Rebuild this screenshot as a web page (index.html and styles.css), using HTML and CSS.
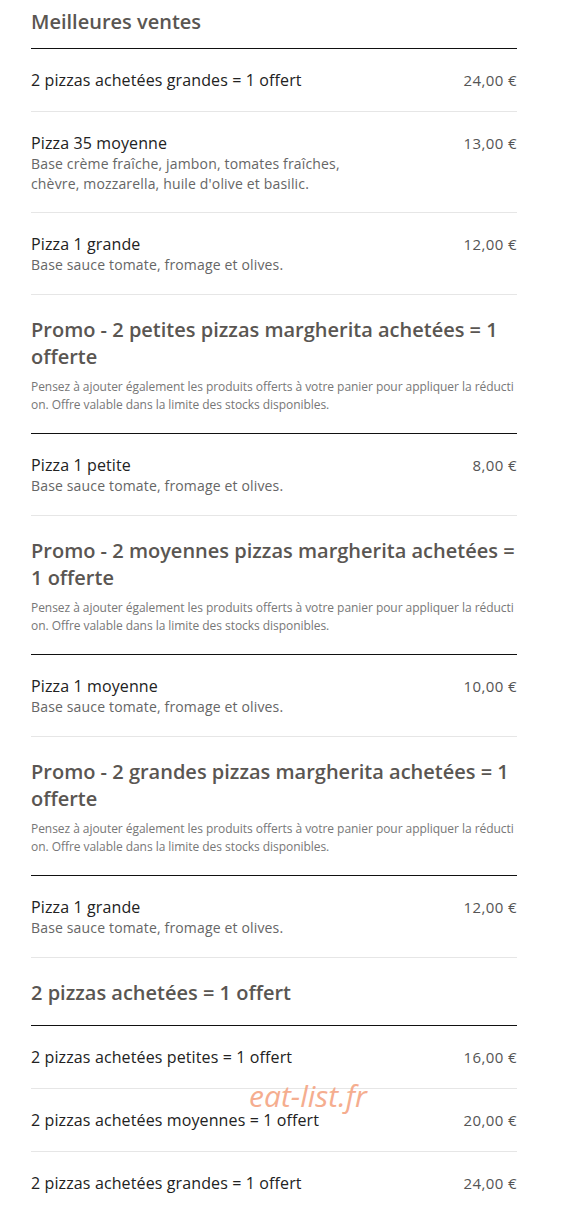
FILE: index.html
```html
<!DOCTYPE html>
<html lang="fr">
<head>
<meta charset="utf-8">
<title>Menu</title>
<link rel="stylesheet" href="styles.css">
</head>
<body>
<main class="menu">
  <section class="category">
    <h2 class="cat-title cat-title--first">Meilleures ventes</h2>
    <div class="items">
      <div class="item"><div class="item-main"><div class="item-name">2 pizzas achetées grandes = 1 offert</div></div><div class="item-price">24,00 €</div></div>
      <div class="item"><div class="item-main"><div class="item-name">Pizza 35 moyenne</div><div class="item-desc item-desc--multi">Base crème fraîche, jambon, tomates fraîches,<br>chèvre, mozzarella, huile d'olive et basilic.</div></div><div class="item-price">13,00 €</div></div>
      <div class="item"><div class="item-main"><div class="item-name">Pizza 1 grande</div><div class="item-desc">Base sauce tomate, fromage et olives.</div></div><div class="item-price">12,00 €</div></div>
    </div>
  </section>

  <section class="category">
    <h2 class="cat-title">Promo - 2 petites pizzas margherita achetées = 1 offerte</h2>
    <p class="cat-desc">Pensez à ajouter également les produits offerts à votre panier pour appliquer la réduction. Offre valable dans la limite des stocks disponibles.</p>
    <div class="items">
      <div class="item"><div class="item-main"><div class="item-name">Pizza 1 petite</div><div class="item-desc">Base sauce tomate, fromage et olives.</div></div><div class="item-price">8,00 €</div></div>
    </div>
  </section>

  <section class="category">
    <h2 class="cat-title">Promo - 2 moyennes pizzas margherita achetées = 1 offerte</h2>
    <p class="cat-desc">Pensez à ajouter également les produits offerts à votre panier pour appliquer la réduction. Offre valable dans la limite des stocks disponibles.</p>
    <div class="items">
      <div class="item"><div class="item-main"><div class="item-name">Pizza 1 moyenne</div><div class="item-desc">Base sauce tomate, fromage et olives.</div></div><div class="item-price">10,00 €</div></div>
    </div>
  </section>

  <section class="category">
    <h2 class="cat-title">Promo - 2 grandes pizzas margherita achetées = 1 offerte</h2>
    <p class="cat-desc">Pensez à ajouter également les produits offerts à votre panier pour appliquer la réduction. Offre valable dans la limite des stocks disponibles.</p>
    <div class="items">
      <div class="item"><div class="item-main"><div class="item-name">Pizza 1 grande</div><div class="item-desc">Base sauce tomate, fromage et olives.</div></div><div class="item-price">12,00 €</div></div>
    </div>
  </section>

  <section class="category">
    <h2 class="cat-title cat-title--nodesc">2 pizzas achetées = 1 offert</h2>
    <div class="items">
      <div class="item"><div class="item-main"><div class="item-name">2 pizzas achetées petites = 1 offert</div></div><div class="item-price">16,00 €</div></div>
      <div class="item"><div class="item-main"><div class="item-name">2 pizzas achetées moyennes = 1 offert</div></div><div class="item-price">20,00 €</div></div>
      <div class="item item--last"><div class="item-main"><div class="item-name">2 pizzas achetées grandes = 1 offert</div></div><div class="item-price">24,00 €</div></div>
    </div>
  </section>
  <div class="watermark">eat-list.fr</div>
</main>
</body>
</html>
```

FILE: styles.css
```css
html, body {
  margin: 0;
  padding: 0;
  background: #fff;
}

body {
  font-family: "Open Sans", "Liberation Sans", sans-serif;
}

.menu {
  position: relative;
  width: 486px;
  margin-left: 31px;
  padding-top: 8px;
}

.cat-title {
  margin: 21px 0 0;
  font-size: 20px;
  line-height: 27px;
  font-weight: 600;
  color: #5a5652;
}

.cat-title--first {
  margin-top: 0;
  margin-bottom: 13px;
}

.cat-title--nodesc {
  margin-bottom: 19px;
}

.cat-desc {
  margin: 8px 0 19px;
  font-size: 12px;
  line-height: 18px;
  color: #777;
  letter-spacing: -0.05px;
  word-break: break-all;
}

.items {
  border-top: 1px solid #111;
}

.item {
  display: flex;
  justify-content: space-between;
  align-items: flex-start;
  padding: 20px 0 20px;
  border-bottom: 1px solid #e6e6e6;
}

.item-main {
  display: flex;
  flex-direction: column;
}

.item-name {
  font-size: 16px;
  line-height: 22px;
  color: #222;
  letter-spacing: 0.12px;
}

.item-desc {
  font-size: 14px;
  line-height: 20px;
  color: #666;
  letter-spacing: 0.16px;
  margin-bottom: -1px;
}

.item-desc--multi {
  margin-bottom: -2px;
}

.item-price {
  font-size: 15px;
  line-height: 22px;
  color: #555;
  letter-spacing: 0.4px;
  white-space: nowrap;
}

.item--last {
  border-bottom: none;
}

.watermark {
  position: absolute;
  left: 218px;
  top: 1078px;
  font-size: 30px;
  line-height: 36px;
  font-style: italic;
  color: #f5a583;
  opacity: 0.9;
}
```
